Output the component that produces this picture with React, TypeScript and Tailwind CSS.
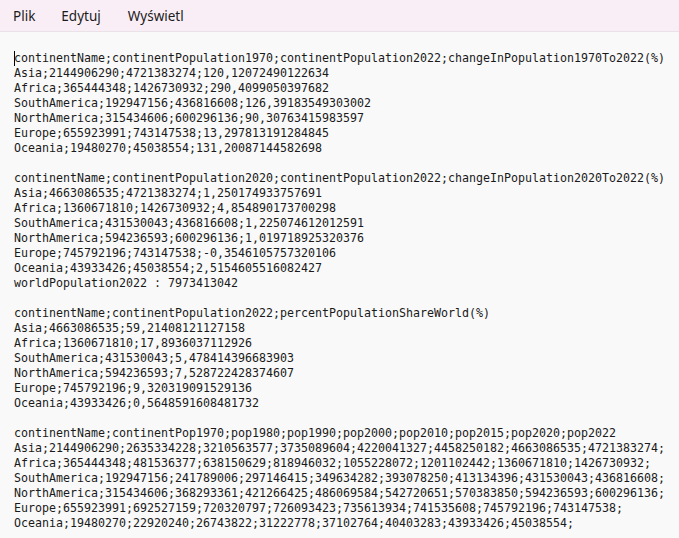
const blocks: string[][] = [
  [
    "continentName;continentPopulation1970;continentPopulation2022;changeInPopulation1970To2022(%)",
    "Asia;2144906290;4721383274;120,12072490122634",
    "Africa;365444348;1426730932;290,4099050397682",
    "SouthAmerica;192947156;436816608;126,39183549303002",
    "NorthAmerica;315434606;600296136;90,30763415983597",
    "Europe;655923991;743147538;13,297813191284845",
    "Oceania;19480270;45038554;131,20087144582698",
  ],
  [
    "continentName;continentPopulation2020;continentPopulation2022;changeInPopulation2020To2022(%)",
    "Asia;4663086535;4721383274;1,250174933757691",
    "Africa;1360671810;1426730932;4,854890173700298",
    "SouthAmerica;431530043;436816608;1,225074612012591",
    "NorthAmerica;594236593;600296136;1,019718925320376",
    "Europe;745792196;743147538;-0,3546105757320106",
    "Oceania;43933426;45038554;2,5154605516082427",
    "worldPopulation2022 : 7973413042",
  ],
  [
    "continentName;continentPopulation2022;percentPopulationShareWorld(%)",
    "Asia;4663086535;59,21408121127158",
    "Africa;1360671810;17,8936037112926",
    "SouthAmerica;431530043;5,478414396683903",
    "NorthAmerica;594236593;7,528722428374607",
    "Europe;745792196;9,320319091529136",
    "Oceania;43933426;0,5648591608481732",
  ],
  [
    "continentName;continentPop1970;pop1980;pop1990;pop2000;pop2010;pop2015;pop2020;pop2022",
    "Asia;2144906290;2635334228;3210563577;3735089604;4220041327;4458250182;4663086535;4721383274;",
    "Africa;365444348;481536377;638150629;818946032;1055228072;1201102442;1360671810;1426730932;",
    "SouthAmerica;192947156;241789006;297146415;349634282;393078250;413134396;431530043;436816608;",
    "NorthAmerica;315434606;368293361;421266425;486069584;542720651;570383850;594236593;600296136;",
    "Europe;655923991;692527159;720320797;726093423;735613934;741535608;745792196;743147538;",
    "Oceania;19480270;22920240;26743822;31222778;37102764;40403283;43933426;45038554;",
  ],
];

const App = () => {
  return (
    <div className="w-full h-[538px] overflow-hidden bg-[#f9f9f9] flex flex-col">
      <div className="h-[32px] shrink-0 bg-[#f9eef6] border-b border-[#e9e3e8] flex items-center pt-[2px] pl-[13px] gap-[26px] font-['Noto_Sans',sans-serif] text-[13.5px] text-[#1b1b1b]">
        <span>Plik</span>
        <span>Edytuj</span>
        <span className="ml-[1px]">Wyświetl</span>
      </div>

      <div className="pt-[19px] pl-[14px] font-['DejaVu_Sans_Mono',monospace] text-[11.63px] leading-[15px] text-[#1a1a1a] whitespace-pre">
        {blocks.map((lines, b) => (
          <div key={b} className="mb-[15px]">
            {lines.map((line, i) => (
              <div key={i} className="relative">
                {b === 0 && i === 0 && (
                  <span className="absolute left-0 top-0 w-px h-[15px] bg-black" />
                )}
                {line}
              </div>
            ))}
          </div>
        ))}
      </div>
    </div>
  );
};

export default App;
